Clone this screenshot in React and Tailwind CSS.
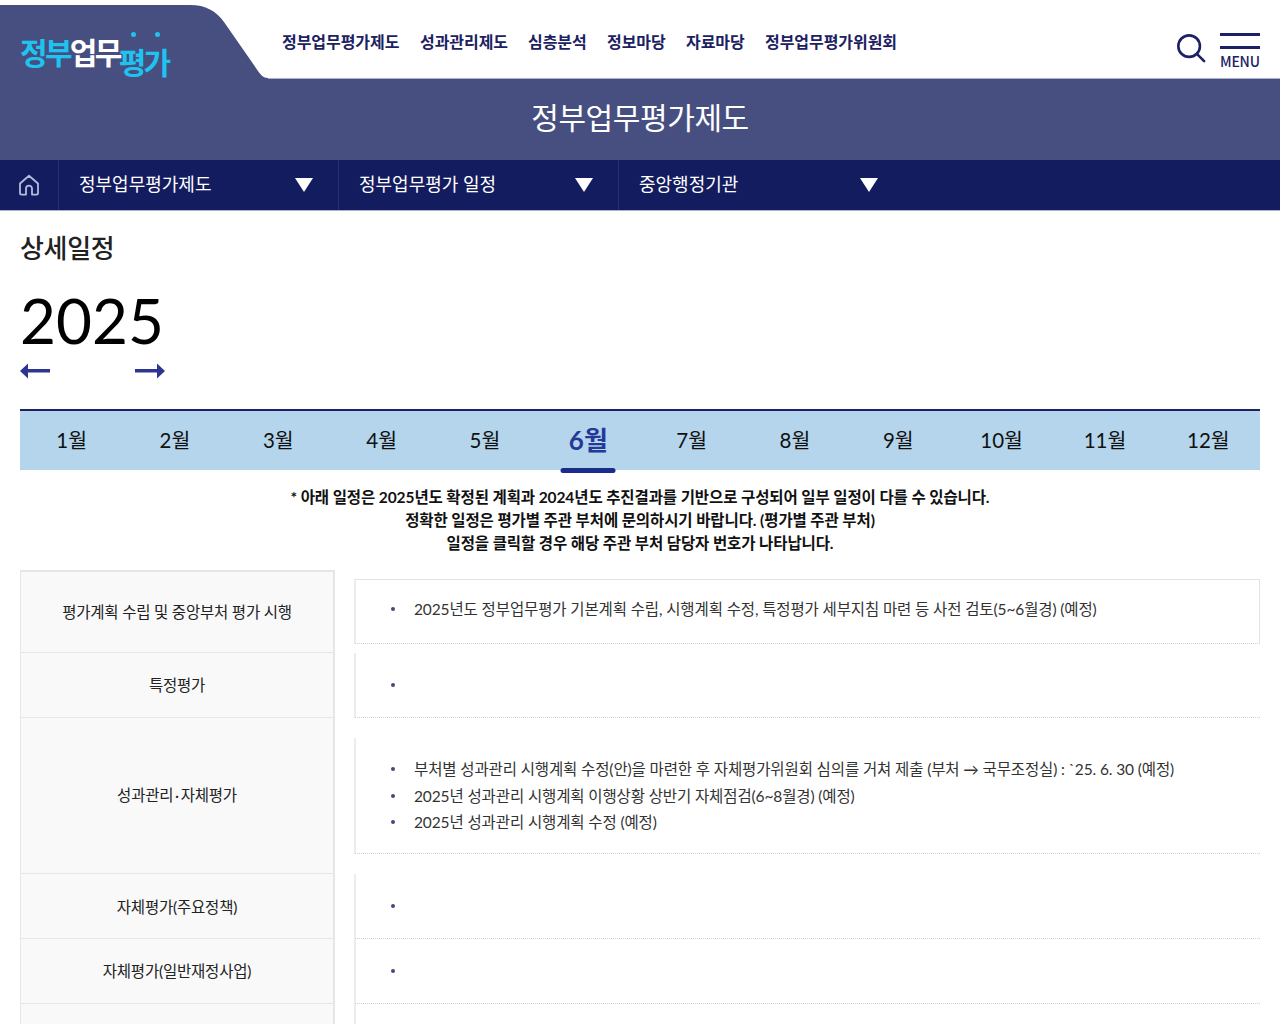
const font = "font-['Lato','Noto_Sans_CJK_KR',sans-serif]";

const topMenu = [
  ["정부업무평가제도", "w-[138px]"],
  ["성과관리제도", "w-[108px]"],
  ["심층분석", "w-[79px]"],
  ["정보마당", "w-[79px]"],
  ["자료마당", "w-[79px]"],
  ["정부업무평가위원회", "w-auto"],
];
const months = ["1월", "2월", "3월", "4월", "5월", "6월", "7월", "8월", "9월", "10월", "11월", "12월"];

const Caret = () => (
  <svg width="18" height="14" viewBox="0 0 18 14"><path d="M0 0h18L9 14z" fill="#fff" /></svg>
);

const NavSelect = ({ label, width, pad = "pr-[25px]", border = true }) => (
  <div className={`flex items-center justify-between pl-5 h-full ${width} ${pad} ${border ? "border-r border-[#2a2f78]" : ""}`}>
    <span className="text-[18px] text-white mt-[-2px]">{label}</span>
    <Caret />
  </div>
);

const Row = ({ name, h, rightClass = "", leftClass = "pt-[2px]", items }) => (
  <div className={`grid grid-cols-[315px_1fr] gap-x-[19px] ${h}`}>
    <div className={`flex items-center justify-center bg-[#f9f9fa] border-l border-r-2 border-b border-[#e6e6e9] text-[15.5px] text-[#222] tracking-[-0.2px] ${leftClass}`}>
      {name}
    </div>
    <div className={`flex flex-col justify-center border-l-2 border-[#ececee] border-b border-b-[#d0d0d3] [border-bottom-style:dotted] pl-[35px] gap-[6.5px] ${rightClass}`}>
      {items.map((t, i) => (
        <div key={i} className="flex items-center text-[15.5px] leading-[20px] text-[#333] tracking-[-0.12px]">
          <span className="w-[4px] h-[4px] rounded-full bg-[#48467f] mr-[19px] shrink-0" />
          <span>{t}</span>
        </div>
      ))}
    </div>
  </div>
);

export default function App() {
  return (
    <div className={`${font} h-screen overflow-hidden bg-white`}>
      {/* top */}
      <header className="relative h-[79px] flex items-start border-b border-[#aab0cf]">
        <div className="relative w-[282px] h-[78px] shrink-0">
          <svg className="absolute left-0 top-0" width="270" height="79" viewBox="0 0 270 79">
            <path d="M0 5H190C206 5 216 11 224 22L258 71C261 75 263 78 268 78V79H0z" fill="#474f81" />
          </svg>
          <div className="absolute left-[20px] top-[32px] flex items-start text-[30px] leading-[40px] font-bold tracking-[-2.7px] whitespace-nowrap">
            <span className="text-[#1ec3f0]">정부</span>
            <span className="text-white">업무</span>
            <span className="text-[#1ec3f0] mt-[10px] ml-[-1px]">평가</span>
          </div>
          <span className="absolute left-[131px] top-[32px] w-[5px] h-[5px] rounded-full bg-[#1ec3f0]" />
          <span className="absolute left-[155px] top-[32px] w-[5px] h-[5px] rounded-full bg-[#1ec3f0]" />
        </div>
        <nav className="flex items-center h-[84px] flex-1">
          {topMenu.map(([t, w]) => (
            <a key={t} className={`${w} text-[16px] font-bold text-[#1c2162] tracking-[-0.05px] whitespace-nowrap`}>{t}</a>
          ))}
        </nav>
        <div className="flex items-start pt-[33px] pr-[20px]">
          <svg width="30" height="30" viewBox="0 0 32 32" fill="none" stroke="#1c2165" className="mr-[14px]">
            <circle cx="14" cy="14" r="11.5" strokeWidth="2.8" />
            <path d="M22.5 22.5L30 30" strokeWidth="2.8" strokeLinecap="round" />
          </svg>
          <div className="w-[40px]">
            <div className="h-[3px] bg-[#1c2165]" />
            <div className="h-[3px] bg-[#1c2165] mt-[10px]" />
            <div className="font-['Noto_Sans_CJK_KR',sans-serif] text-[14px] leading-[16px] mt-[4px] font-medium tracking-[-0.2px] text-[#1c2165]">MENU</div>
          </div>
        </div>
      </header>

      <div className="h-[81px] bg-[#474f81] flex items-center justify-center text-[30px] text-white tracking-[-0.4px] pb-[5px]">
        정부업무평가제도
      </div>

      {/* sub nav */}
      <div className="h-[51px] bg-[#141c60] border-b border-[#aab0cf] flex items-center">
        <div className="w-[59px] h-full flex items-center justify-center border-r border-[#2a2f78]">
          <svg width="22" height="22" viewBox="0 0 22 22" fill="none" stroke="#b3bcdc" strokeWidth="1.8" strokeLinejoin="round">
            <path d="M2 9.500L11 1.800l9 7.700V19a1.600 1.600 0 0 1-1.600 1.600H14v-6a3 3 0 0 0-6 0v6H3.600A1.600 1.600 0 0 1 2 19z" />
          </svg>
        </div>
        <NavSelect label="정부업무평가제도" width="w-[280px]" />
        <NavSelect label="정부업무평가 일정" width="w-[280px]" />
        <NavSelect label="중앙행정기관" width="w-[260px]" pad="pr-[1px]" border={false} />
      </div>

      <main className="px-5">
        <h2 className="mt-[18px] text-[26px] leading-[38px] font-medium text-[#222] tracking-[-0.3px]">상세일정</h2>
        <div className="text-[62px] leading-[70px] text-black mt-[18px]">2025</div>
        <div className="flex items-center w-[145px] justify-between mt-[8px]">
          <svg width="30" height="16" viewBox="0 0 30 16" fill="#2c3690"><path d="M0 8l8-7.500V6h22v3.500H8V15.500z" /></svg>
          <svg width="30" height="16" viewBox="0 0 30 16" fill="#2c3690"><path d="M30 8l-8-7.500V6H0v3.500h22V15.500z" /></svg>
        </div>

        {/* months */}
        <div className="mt-[30px] h-[61px] bg-[#b4d5ec] border-t-2 border-[#1c2165] grid grid-cols-12">
          {months.map((m) => (
            m === "6월" ? (
              <div key={m} className="relative flex items-center justify-center text-[26px] font-bold text-[#24389a]">
                {m}
                <span className="absolute left-1/2 -translate-x-1/2 bottom-[-3px] w-[55px] h-[5px] rounded-full bg-[#1c2c8c]" />
              </div>
            ) : (
              <div key={m} className="flex items-center justify-center text-[20.5px] text-[#111]">{m}</div>
            )
          ))}
        </div>

        <div className="mt-[16px] text-center text-[15.5px] leading-[23px] font-bold text-[#111] tracking-[-0.1px]">
          <p>* 아래 일정은 2025년도 확정된 계획과 2024년도 추진결과를 기반으로 구성되어 일부 일정이 다를 수 있습니다.</p>
          <p>정확한 일정은 평가별 주관 부처에 문의하시기 바랍니다. (평가별 주관 부처)</p>
          <p>일정을 클릭할 경우 해당 주관 부처 담당자 번호가 나타납니다.</p>
        </div>

        <div className="mt-[15px]">
          <Row name="평가계획 수립 및 중앙부처 평가 시행" h="h-[83px]" leftClass="border-t-2 pt-[1px]" rightClass="mt-[9px] mb-[9px] border-t border-t-[#e3e3e6] border-r border-r-[#e3e3e6] pb-[6px]"
            items={["2025년도 정부업무평가 기본계획 수립, 시행계획 수정, 특정평가 세부지침 마련 등 사전 검토(5~6월경) (예정)"]} />
          <Row name="특정평가" h="h-[65px]" items={[""]} />
          <Row name={"성과관리\u2009·\u2009자체평가"} h="h-[156px]" leftClass="" rightClass="my-5"
            items={[
              "부처별 성과관리 시행계획 수정(안)을 마련한 후 자체평가위원회 심의를 거쳐 제출 (부처 → 국무조정실) : `25. 6. 30 (예정)",
              "2025년 성과관리 시행계획 이행상황 상반기 자체점검(6~8월경) (예정)",
              "2025년 성과관리 시행계획 수정 (예정)",
            ]} />
          <Row name="자체평가(주요정책)" h="h-[65px]" leftClass="pt-[3px]" items={[""]} />
          <Row name="자체평가(일반재정사업)" h="h-[65px]" items={[""]} />
          <Row name="" h="h-[65px]" items={[""]} />
        </div>
      </main>
    </div>
  );
}
